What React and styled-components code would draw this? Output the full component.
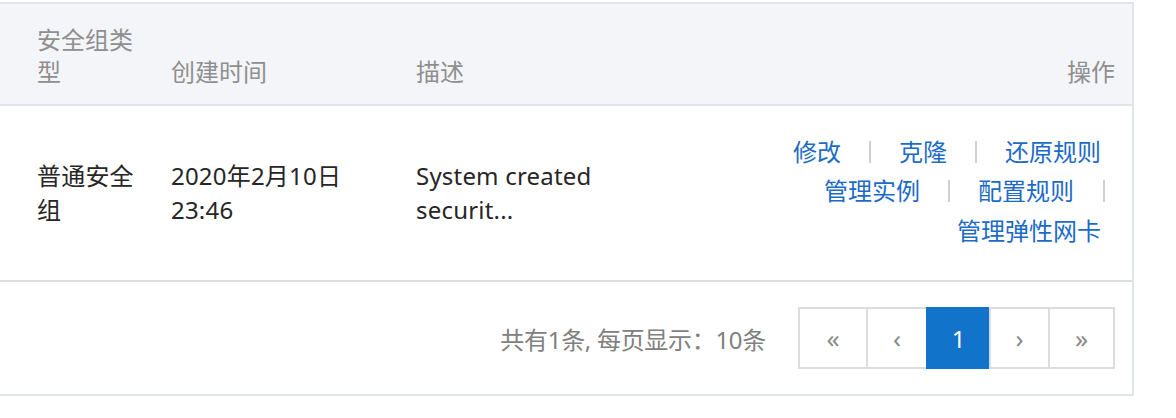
import React from "react";
import styled, { createGlobalStyle } from "styled-components";

const GlobalStyle = createGlobalStyle`
  html, body {
    margin: 0;
    padding: 0;
    background: #ffffff;
  }
  body {
    font-family: "Noto Sans", "Noto Sans CJK SC", sans-serif;
    font-size: 24px;
    color: #333333;
  }
`;

const Page = styled.div`
  padding-top: 2px;
  width: 1176px;
`;

const Table = styled.div`
  width: 1132px;
  border-top: 2px solid #e1e5ea;
  border-right: 2px solid #e1e5ea;
  border-bottom: 2px solid #e1e5ea;
  background: #ffffff;
`;

const Row = styled.div`
  display: grid;
  grid-template-columns: 154px 245px 234px 1fr;
  height: ${(p) => p.$height}px;
  background: ${(p) => p.$bg || "#ffffff"};
  border-bottom: 2px solid ${(p) => p.$line};
`;

const HeadCell = styled.div`
  align-self: end;
  padding: 0 17px 16px ${(p) => (p.$first ? 37 : 17)}px;
  line-height: 32px;
  color: #8f8f8f;
  text-align: ${(p) => (p.$right ? "right" : "left")};
`;

const BodyCell = styled.div`
  align-self: center;
  padding: 0 17px 0 ${(p) => (p.$first ? 37 : 17)}px;
  line-height: 34px;
  color: #262626;
  letter-spacing: 0.2px;
`;

const ActionCell = styled.div`
  align-self: center;
  padding: 0 17px 4px 17px;
  display: flex;
  flex-direction: column;
`;

const ActionLine = styled.div`
  display: flex;
  justify-content: flex-end;
  align-items: center;
  height: 39.5px;
`;

const Link = styled.a`
  color: #1c6bc8;
  text-decoration: none;
  line-height: 32px;
  margin-right: ${(p) => (p.$last ? 14 : 0)}px;
  cursor: pointer;
`;

const Sep = styled.span`
  display: inline-block;
  width: 2px;
  height: 22px;
  background: #cfcfcf;
  margin: 0 ${(p) => (p.$trailing ? 10 : 28)}px 0 ${(p) => (p.$trailing ? 29 : 28)}px;
`;

const Footer = styled.div`
  height: 112px;
  display: flex;
  justify-content: flex-end;
  align-items: center;
  padding-right: 17px;
`;

const Summary = styled.span`
  color: #808080;
  margin-right: 32px;
  letter-spacing: -0.3px;
`;

const Pager = styled.div`
  display: flex;
  height: 62px;
`;

const PageButton = styled.button`
  width: ${(p) => p.$w}px;
  height: 62px;
  box-sizing: border-box;
  border: 2px solid ${(p) => (p.$active ? "#1273ca" : "#dddddd")};
  border-right-width: ${(p) => (p.$end ? 2 : 0)}px;
  background: ${(p) => (p.$active ? "#1273ca" : "#ffffff")};
  color: ${(p) => (p.$active ? "#ffffff" : "#8a8a8a")};
  font-family: "Noto Sans", "Noto Sans CJK SC", sans-serif;
  font-size: ${(p) => (p.$active ? 24 : 26)}px;
  padding: 0;
  display: flex;
  align-items: center;
  justify-content: center;
  cursor: pointer;
`;

export default function App() {
  return (
    <Page>
      <GlobalStyle />
      <Table>
        <Row $height={100} $bg="#f4f5f9" $line="#e1e5ea">
          <HeadCell $first>安全组类型</HeadCell>
          <HeadCell>创建时间</HeadCell>
          <HeadCell>描述</HeadCell>
          <HeadCell $right>操作</HeadCell>
        </Row>
        <Row $height={174} $line="#dedede">
          <BodyCell $first>普通安全组</BodyCell>
          <BodyCell>2020年2月10日 23:46</BodyCell>
          <BodyCell>System created securit...</BodyCell>
          <ActionCell>
            <ActionLine>
              <Link>修改</Link>
              <Sep />
              <Link>克隆</Link>
              <Sep />
              <Link $last>还原规则</Link>
            </ActionLine>
            <ActionLine>
              <Link>管理实例</Link>
              <Sep />
              <Link>配置规则</Link>
              <Sep $trailing />
            </ActionLine>
            <ActionLine>
              <Link $last>管理弹性网卡</Link>
            </ActionLine>
          </ActionCell>
        </Row>
        <Footer>
          <Summary>共有1条, 每页显示：10条</Summary>
          <Pager>
            <PageButton $w={68}>«</PageButton>
            <PageButton $w={60}>‹</PageButton>
            <PageButton $w={63} $active>1</PageButton>
            <PageButton $w={59}>›</PageButton>
            <PageButton $w={67} $end>»</PageButton>
          </Pager>
        </Footer>
      </Table>
    </Page>
  );
}
